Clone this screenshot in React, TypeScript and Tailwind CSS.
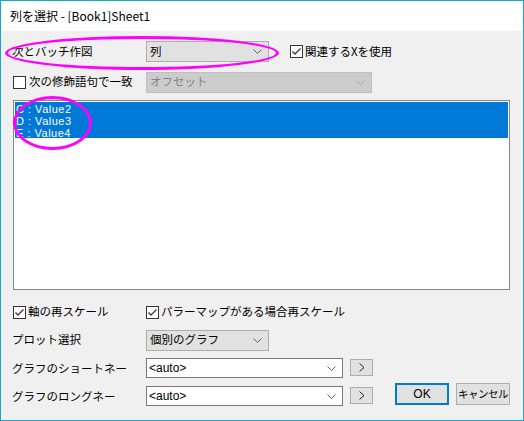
import React from 'react';

const jp = { fontFamily: '"Noto Sans CJK JP", "Liberation Sans", sans-serif' };
const latin = { fontFamily: '"Liberation Sans", sans-serif' };

function Chevron({ color = '#606060' }: { color?: string }) {
  return (
    <svg width="9" height="5" viewBox="0 0 9 5" className="shrink-0">
      <path d="M0.5 0.5 L4.5 4.5 L8.5 0.5" fill="none" stroke={color} strokeWidth="1" />
    </svg>
  );
}

function CheckBox({ checked }: { checked: boolean }) {
  return (
    <div className="w-[13px] h-[13px] border border-[#333333] bg-white flex items-center justify-center shrink-0">
      {checked && (
        <svg width="11" height="11" viewBox="0 0 11 11">
          <path d="M1.5 5.5 L4 8 L9.5 2.5" fill="none" stroke="#3c3c3c" strokeWidth="1.4" />
        </svg>
      )}
    </div>
  );
}

function Select({ value, width, disabled }: { value: string; width: string; disabled?: boolean }) {
  return (
    <div
      className={`${width} h-[21px] flex items-center justify-between pl-[3px] pr-[6px] border ${
        disabled ? 'bg-[#cccccc] border-[#bfbfbf] text-[#838383]' : 'bg-[#e1e1e1] border-[#adadad] text-black'
      }`}
    >
      <span className="text-[11.5px] leading-none whitespace-nowrap">{value}</span>
      <Chevron color={disabled ? '#a6a6a6' : '#606060'} />
    </div>
  );
}

function Combo() {
  return (
    <div className="w-[197px] h-[20px] bg-white border border-[#7a7a7a] flex items-center justify-between pl-[2px] pr-[6px]">
      <span className="text-[12px] leading-none" style={latin}>
        &lt;auto&gt;
      </span>
      <Chevron />
    </div>
  );
}

function ArrowButton() {
  return (
    <div className="ml-[7px] mt-px w-[23px] h-[17px] bg-[#e1e1e1] border border-[#adadad] flex items-center justify-center">
      <svg width="6" height="9" viewBox="0 0 6 9">
        <path d="M0.5 0.5 L5 4.5 L0.5 8.5" fill="none" stroke="#222" strokeWidth="1" />
      </svg>
    </div>
  );
}

export default function App() {
  return (
    <div className="relative w-[524px] h-[421px] border border-[#19a6c3] bg-[#f0f0f0] flex flex-col text-black" style={jp}>
      <div className="h-[30px] bg-white flex items-center pl-[9px] text-[12px] shrink-0">
        列を選択 - [Book1]Sheet1
      </div>

      <div className="flex flex-col pl-[11px] pt-[10px] text-[11.5px]">
        <div className="flex items-center h-[21px]">
          <span className="w-[134px]">次とバッチ作図</span>
          <Select value="列" width="w-[123px]" />
          <div className="flex items-center ml-[21px] gap-[2px]">
            <CheckBox checked />
            <span>関連するXを使用</span>
          </div>
        </div>

        <div className="flex items-center h-[20px] mt-[10px]">
          <div className="w-[134px] flex items-center gap-[3px] pl-px">
            <CheckBox checked={false} />
            <span className="whitespace-nowrap">次の修飾語句で一致</span>
          </div>
          <Select value="オフセット" width="w-[226px]" disabled />
        </div>

        <div className="ml-px mt-[8px] w-[497px] h-[190px] bg-white border border-[#828790] p-px">
          <div className="bg-[#0078d7] text-white text-[11px] leading-[12px] tracking-[0.5px] pl-[1px] pt-px h-[36px]" style={latin}>
            <div className="h-[12px]">C : Value2</div>
            <div className="h-[12px]">D : Value3</div>
            <div className="h-[11px]">E : Value4</div>
          </div>
        </div>

        <div className="flex items-center h-[20px] mt-[12px] pl-px">
          <div className="w-[133px] flex items-center gap-[2px]">
            <CheckBox checked />
            <span>軸の再スケール</span>
          </div>
          <div className="flex items-center gap-[2px]">
            <CheckBox checked />
            <span>パラーマップがある場合再スケール</span>
          </div>
        </div>

        <div className="flex items-center h-[20px] mt-[8px]">
          <span className="w-[134px]">プロット選択</span>
          <Select value="個別のグラフ" width="w-[123px]" />
        </div>

        <div className="flex items-start h-[20px] mt-[8px]">
          <span className="w-[134px] leading-[20px]">グラフのショートネー</span>
          <Combo />
          <ArrowButton />
        </div>

        <div className="flex items-start mt-[5px]">
          <span className="w-[134px] leading-[20px] mt-[3px]">グラフのロングネー</span>
          <div className="mt-[3px] flex items-start">
            <Combo />
            <ArrowButton />
          </div>
          <div className="ml-[22px] w-[54px] h-[22px] bg-[#e1e1e1] border-2 border-[#0078d7] flex items-center justify-center text-[12px]" style={latin}>
            OK
          </div>
          <div className="ml-[7px] w-[54px] h-[22px] bg-[#e1e1e1] border border-[#adadad] flex items-center justify-center text-[10.5px] whitespace-nowrap tracking-[-0.5px]">
            キャンセル
          </div>
        </div>
      </div>

      <div className="absolute left-[4px] top-[35px] w-[274px] h-[34px] rounded-[50%] border-[3px] border-[#ff00ff] pointer-events-none" />
      <div className="absolute left-[12px] top-[95px] w-[79px] h-[54px] rounded-[50%] border-[3px] border-[#ff00ff] pointer-events-none" />
    </div>
  );
}
